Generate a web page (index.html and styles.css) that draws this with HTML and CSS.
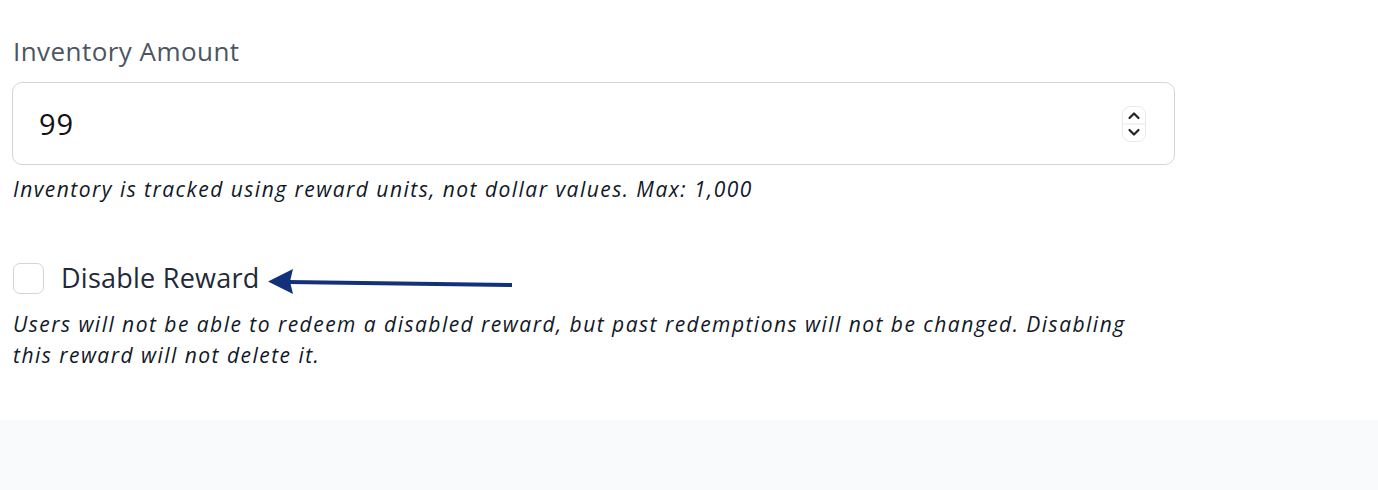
FILE: index.html
```html
<!DOCTYPE html>
<html>
<head>
<meta charset="utf-8">
<link rel="stylesheet" href="styles.css">
</head>
<body>
<main class="page">
  <section class="form">
    <div class="field">
      <label class="label" for="inv">Inventory Amount</label>
      <div class="input">
        <span class="value">99</span>
        <span class="spinner">
          <svg width="24" height="36" viewBox="0 0 24 36">
            <rect x="0.5" y="0.5" width="23" height="35" rx="8" fill="#fff" stroke="#e5e7eb"/>
            <line x1="1" y1="18" x2="23" y2="18" stroke="#e5e7eb"/>
            <path d="M7.5 12 L12 7.5 L16.5 12" fill="none" stroke="#222" stroke-width="2.2" stroke-linecap="round" stroke-linejoin="round"/>
            <path d="M7.5 24 L12 28.5 L16.5 24" fill="none" stroke="#222" stroke-width="2.2" stroke-linecap="round" stroke-linejoin="round"/>
          </svg>
        </span>
      </div>
      <p class="help">Inventory is tracked using reward units, not dollar values. Max: 1,000</p>
    </div>
    <div class="field check-field">
      <div class="check-row">
        <span class="checkbox"></span>
        <span class="check-label">Disable Reward</span>
        <svg class="arrow" width="250" height="30" viewBox="0 0 250 30">
          <path d="M20 14 L244 17" stroke="#13307a" stroke-width="4" fill="none"/>
          <path d="M0 13.5 L25 1 L22 13.5 L25 26 Z" fill="#13307a"/>
        </svg>
      </div>
      <p class="help help-wide">Users will not be able to redeem a disabled reward, but past redemptions will not be changed. Disabling this reward will not delete it.</p>
    </div>
  </section>
  <footer class="band"></footer>
</main>
</body>
</html>
```
FILE: styles.css
```css
* { box-sizing: border-box; }
html, body { margin: 0; padding: 0; background: #fff; }
body { font-family: "Open Sans", "Noto Sans", sans-serif; color: #1f2937; }
.page { display: flex; flex-direction: column; height: 490px; }
.form { padding: 33px 0 0 12px; width: 1175px; flex: 1; }
.field { display: flex; flex-direction: column; }
.label { font-size: 26px; line-height: 36px; letter-spacing: 0.45px; color: #4b5563; padding-left: 1px; margin-bottom: 13px; }
.input { height: 83px; border: 1.5px solid #d1d5db; border-radius: 10px; display: flex; align-items: center; justify-content: space-between; padding: 0 28px 0 26px; }
.value { font-size: 29px; letter-spacing: 1px; color: #111; }
.spinner { display: flex; }
.help { margin: 9px 0 0 1px; font-style: italic; font-size: 21px; line-height: 30px; letter-spacing: 1.47px; color: #111827; }
.check-field { margin-top: 58px; }
.check-row { display: flex; align-items: center; gap: 17px; position: relative; }
.checkbox { width: 31px; height: 31px; border: 1.5px solid #d1d5db; border-radius: 7px; margin-left: 1px; }
.check-label { font-size: 27px; line-height: 32px; letter-spacing: 0.25px; color: #1f2937; }
.arrow { position: absolute; left: 256px; top: 5.5px; }
.check-field .help { margin-top: 15px; line-height: 31px; }
.help-wide { max-width: 1150px; }
.band { height: 70px; background: #f9fafb; }
```
